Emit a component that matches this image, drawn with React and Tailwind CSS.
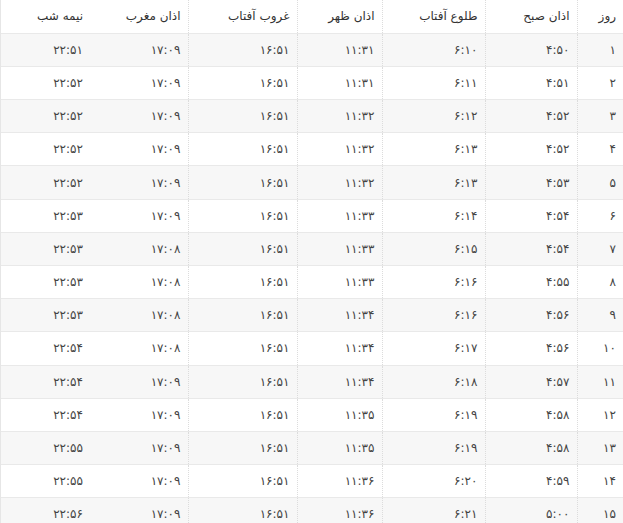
const rows = [
  ['۱', '۴:۵۰', '۶:۱۰', '۱۱:۳۱', '۱۶:۵۱', '۱۷:۰۹', '۲۲:۵۱'],
  ['۲', '۴:۵۱', '۶:۱۱', '۱۱:۳۱', '۱۶:۵۱', '۱۷:۰۹', '۲۲:۵۲'],
  ['۳', '۴:۵۲', '۶:۱۲', '۱۱:۳۲', '۱۶:۵۱', '۱۷:۰۹', '۲۲:۵۲'],
  ['۴', '۴:۵۲', '۶:۱۳', '۱۱:۳۲', '۱۶:۵۱', '۱۷:۰۹', '۲۲:۵۲'],
  ['۵', '۴:۵۳', '۶:۱۳', '۱۱:۳۲', '۱۶:۵۱', '۱۷:۰۹', '۲۲:۵۲'],
  ['۶', '۴:۵۴', '۶:۱۴', '۱۱:۳۳', '۱۶:۵۱', '۱۷:۰۹', '۲۲:۵۳'],
  ['۷', '۴:۵۴', '۶:۱۵', '۱۱:۳۳', '۱۶:۵۱', '۱۷:۰۸', '۲۲:۵۳'],
  ['۸', '۴:۵۵', '۶:۱۶', '۱۱:۳۳', '۱۶:۵۱', '۱۷:۰۸', '۲۲:۵۳'],
  ['۹', '۴:۵۶', '۶:۱۶', '۱۱:۳۴', '۱۶:۵۱', '۱۷:۰۸', '۲۲:۵۳'],
  ['۱۰', '۴:۵۶', '۶:۱۷', '۱۱:۳۴', '۱۶:۵۱', '۱۷:۰۸', '۲۲:۵۴'],
  ['۱۱', '۴:۵۷', '۶:۱۸', '۱۱:۳۴', '۱۶:۵۱', '۱۷:۰۹', '۲۲:۵۴'],
  ['۱۲', '۴:۵۸', '۶:۱۹', '۱۱:۳۵', '۱۶:۵۱', '۱۷:۰۹', '۲۲:۵۴'],
  ['۱۳', '۴:۵۸', '۶:۱۹', '۱۱:۳۵', '۱۶:۵۱', '۱۷:۰۹', '۲۲:۵۵'],
  ['۱۴', '۴:۵۹', '۶:۲۰', '۱۱:۳۶', '۱۶:۵۱', '۱۷:۰۹', '۲۲:۵۵'],
  ['۱۵', '۵:۰۰', '۶:۲۱', '۱۱:۳۶', '۱۶:۵۱', '۱۷:۰۹', '۲۲:۵۶'],
];

const headers = ['روز', 'اذان صبح', 'طلوع آفتاب', 'اذان ظهر', 'غروب آفتاب', 'اذان مغرب', 'نیمه شب'];

// right-to-left column widths and their left-edge separators
const cols = [
  'w-[46px] border-l border-dotted border-l-[#dcdcdc]',
  'w-[92px] border-l border-dotted border-l-[#dcdcdc]',
  'w-[103px] border-l border-dotted border-l-[#dcdcdc]',
  'w-[85px] border-l border-dotted border-l-[#dcdcdc]',
  'w-[109px] border-l border-dotted border-l-[#dcdcdc]',
  'w-[98px]',
  'w-[90px] border-l border-l-[#e6e6e6]',
];

const App = () => {
  return <div dir="rtl" className="w-[623px] bg-white font-['DejaVu_Sans',sans-serif] text-[12px]">
    <table className="w-full table-fixed border-collapse">
      <thead>
        <tr className="h-[33.2px] border-b border-[#e9e9e9]">
          {headers.map((h, i) => <th key={h} className={`${cols[i]} pr-[7px] text-right font-normal text-[#333]`}>{h}</th>)}
        </tr>
      </thead>
      <tbody>
        {
          rows.map((row, r) => <tr key={r} className={`h-[33.2px] border-b border-[#e9e9e9] ${r % 2 === 0 ? 'bg-[#f7f7f7]' : 'bg-white'}`}>
            {row.map((v, i) => <td key={i} className={`${cols[i]} pr-[7px] text-right text-[#444] tracking-[1.2px]`}>{v}</td>)}
          </tr>)
        }
      </tbody>
    </table>
  </div>;
};

export default App;
